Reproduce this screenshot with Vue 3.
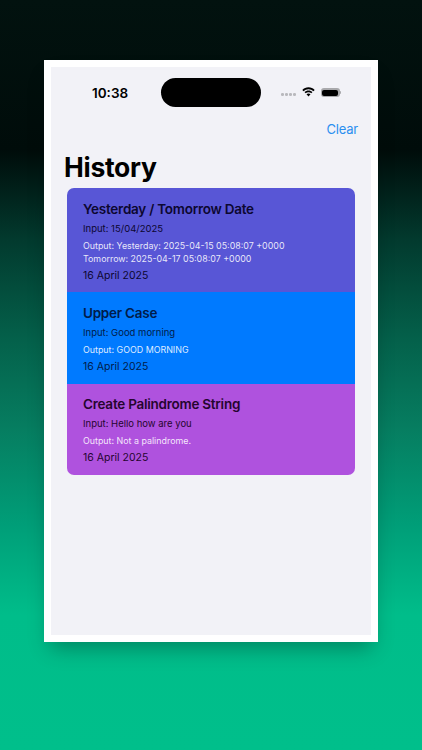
<script setup>
const rows = [
  { id: 1, cls: 'indigo', title: 'Yesterday / Tomorrow Date', input: 'Input: 15/04/2025', output: ['Output: Yesterday: 2025-04-15 05:08:07 +0000', 'Tomorrow: 2025-04-17 05:08:07 +0000'], date: '16 April 2025' },
  { id: 2, cls: 'blue', title: 'Upper Case', input: 'Input: Good morning', output: ['Output: GOOD MORNING'], date: '16 April 2025' },
  { id: 3, cls: 'purple', title: 'Create Palindrome String', input: 'Input: Hello how are you', output: ['Output: Not a palindrome.'], date: '16 April 2025' },
]
</script>

<template>
  <div class="stage">
    <div class="frame">
      <div class="screen">
        <div class="status">
          <span class="time">10:38</span>
          <div class="island"></div>
          <div class="indicators">
            <div class="dots"><i></i><i></i><i></i><i></i></div>
            <svg class="wifi" width="13" height="10" viewBox="0 0 13 10">
              <path d="M6.500 2.300c1.900 0 3.600.7 4.900 2l1.300-1.400C11.100 1.300 8.900.3 6.500.3S1.900 1.300.3 2.900l1.300 1.400c1.300-1.300 3-2 4.900-2z" fill="#000" />
              <path d="M6.500 5.200c1.100 0 2.100.4 2.800 1.100l1.200-1.300C9.500 4 8.100 3.400 6.500 3.400S3.500 4 2.500 5l1.200 1.300c.7-.7 1.700-1.100 2.800-1.100z" fill="#000" />
              <path d="M6.500 9.500 8.500 7.300C8 6.800 7.300 6.500 6.500 6.500S5 6.800 4.500 7.300z" fill="#000" />
            </svg>
            <div class="battery"><div class="fill"></div></div>
          </div>
        </div>
        <div class="nav"><span class="clear">Clear</span></div>
        <h1 class="heading">History</h1>
        <div class="list">
          <div v-for="r in rows" :key="r.id" class="row" :class="r.cls">
            <div class="title">{{ r.title }}</div>
            <div class="input">{{ r.input }}</div>
            <div class="output">
              <div v-for="line in r.output" :key="line">{{ line }}</div>
            </div>
            <div class="date">{{ r.date }}</div>
          </div>
        </div>
      </div>
    </div>
  </div>
</template>

<style>
html, body { margin: 0; padding: 0; }
</style>

<style scoped>
.stage {
  width: 422px;
  height: 750px;
  box-sizing: border-box;
  padding-top: 60px;
  display: flex;
  justify-content: center;
  align-items: flex-start;
  background: linear-gradient(180deg, #02120f 0%, #000c0a 20%, #023a2e 32%, #04604a 45%, #067d60 57%, #009e78 70%, #00bd8a 82%, #00bf8b 100%);
  font-family: Inter, "Liberation Sans", sans-serif;
  overflow: hidden;
}
.frame {
  width: 334px;
  height: 582px;
  box-sizing: border-box;
  padding: 7px;
  background: #fff;
  box-shadow: 0 12px 20px -6px rgba(0, 0, 0, 0.3);
}
.screen {
  height: 100%;
  background: #f2f2f7;
  display: flex;
  flex-direction: column;
}
.status {
  display: flex;
  align-items: center;
  height: 29px;
  margin-top: 11px;
  padding-left: 41px;
}
.time {
  width: 69px;
  font-size: 13.500px;
  font-weight: 600;
  color: #000;
}
.island {
  width: 100px;
  height: 29px;
  border-radius: 15px;
  background: #000;
}
.indicators {
  display: flex;
  align-items: center;
  margin-left: 20px;
}
.dots {
  display: flex;
  gap: 1.500px;
  margin-right: 6px;
  margin-top: 4px;
}
.dots i {
  width: 2.500px;
  height: 2.500px;
  border-radius: 50%;
  background: #b9b9bd;
}
.wifi { margin-right: 6px; margin-top: -2px; }
.battery {
  position: relative;
  width: 19px;
  height: 9px;
  box-sizing: border-box;
  padding: 1.500px;
  border-radius: 3px;
  background: #a9a9ac;
}
.battery::after {
  content: "";
  position: absolute;
  right: -1.500px;
  top: 3px;
  width: 1.500px;
  height: 3px;
  border-radius: 0 1px 1px 0;
  background: #a9a9ac;
}
.fill {
  height: 100%;
  border-radius: 2px;
  background: #000;
}
.nav {
  display: flex;
  justify-content: flex-end;
  margin-top: 13px;
  padding-right: 13px;
}
.clear {
  font-size: 13px;
  line-height: 18px;
  letter-spacing: -0.2px;
  color: #2b8ff0;
}
.heading {
  margin: 12px 0 0 13px;
  font-size: 26.500px;
  line-height: 34px;
  font-weight: 700;
  letter-spacing: -0.3px;
  color: #000;
}
.list {
  margin: 4px 16px 0;
  border-radius: 7px;
  overflow: hidden;
}
.row {
  padding: 12px 16px 9px;
  color: #0c0730;
}
.indigo { background: #5856d6; }
.blue { background: #007aff; color: #001c4a; padding-bottom: 10px; }
.purple { background: #af52de; color: #25052f; padding-top: 11px; padding-bottom: 10px; }
.title {
  font-size: 13.500px;
  line-height: 18px;
  font-weight: 600;
  letter-spacing: -0.25px;
}
.input {
  margin-top: 4px;
  font-size: 9.500px;
  line-height: 13px;
}
.output {
  margin-top: 4px;
  font-size: 8.900px;
  line-height: 13px;
  color: rgba(255, 255, 255, 0.88);
}
.date {
  margin-top: 4px;
  font-size: 10.500px;
  line-height: 14px;
}
</style>
